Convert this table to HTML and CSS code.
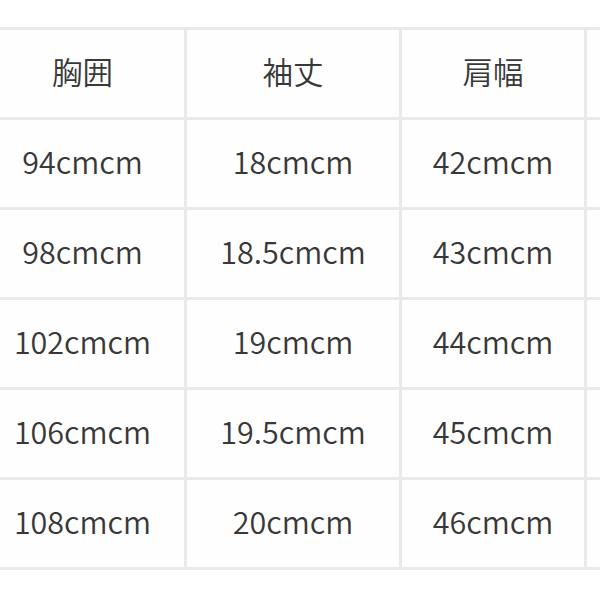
FILE: index.html
```html
<!DOCTYPE html>
<html lang="ja">
<head>
<meta charset="utf-8">
<link rel="stylesheet" href="styles.css">
</head>
<body>
<div class="wrap">
  <div class="sheet">
    <div class="cell">胸囲</div><div class="cell">袖丈</div><div class="cell">肩幅</div><div class="cell"></div>
    <div class="cell">94cmcm</div><div class="cell">18cmcm</div><div class="cell">42cmcm</div><div class="cell"></div>
    <div class="cell">98cmcm</div><div class="cell">18.5cmcm</div><div class="cell">43cmcm</div><div class="cell"></div>
    <div class="cell">102cmcm</div><div class="cell">19cmcm</div><div class="cell">44cmcm</div><div class="cell"></div>
    <div class="cell">106cmcm</div><div class="cell">19.5cmcm</div><div class="cell">45cmcm</div><div class="cell"></div>
    <div class="cell">108cmcm</div><div class="cell">20cmcm</div><div class="cell">46cmcm</div><div class="cell"></div>
  </div>
</div>
</body>
</html>
```
FILE: styles.css
```css
html, body {
  margin: 0;
  padding: 0;
  background: #ffffff;
}
.wrap {
  width: 600px;
  height: 600px;
  overflow: hidden;
}
.sheet {
  display: grid;
  grid-template-columns: 203px 212px 182px 200px;
  grid-auto-rows: 87px;
  gap: 3px;
  padding: 3px;
  width: max-content;
  margin: 27px 0 0 -22px;
  background: #e9e9e9;
}
.cell {
  background: #fefefe;
  display: flex;
  align-items: center;
  justify-content: center;
  padding-bottom: 5px;
  box-sizing: border-box;
  font-family: "Noto Sans CJK JP", "Noto Sans", sans-serif;
  font-size: 30.5px;
  font-weight: 350;
  color: #383838;
}
```
